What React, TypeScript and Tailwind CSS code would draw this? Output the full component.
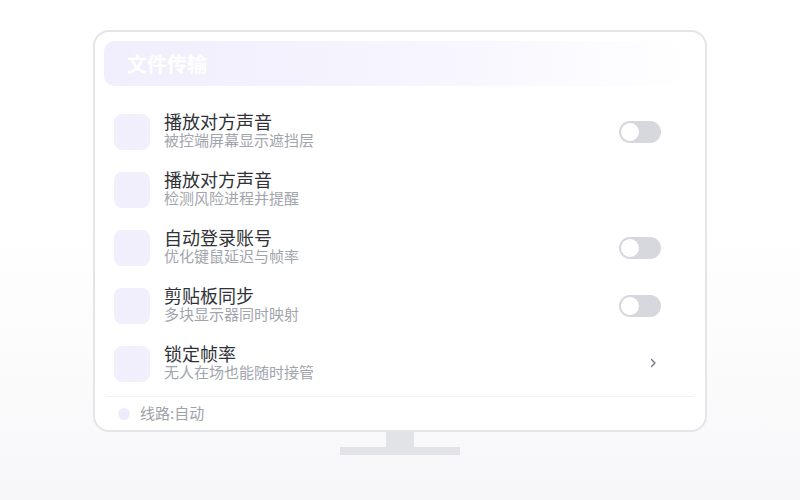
import React from "react";

type Row = {
  title: string;
  desc: string;
  action: "toggle" | "none" | "chevron";
};

const rows: Row[] = [
  { title: "播放对方声音", desc: "被控端屏幕显示遮挡层", action: "toggle" },
  { title: "播放对方声音", desc: "检测风险进程并提醒", action: "none" },
  { title: "自动登录账号", desc: "优化键鼠延迟与帧率", action: "toggle" },
  { title: "剪贴板同步", desc: "多块显示器同时映射", action: "toggle" },
  { title: "锁定帧率", desc: "无人在场也能随时接管", action: "chevron" },
];

function Toggle() {
  return (
    <div className="w-[42px] h-[22px] rounded-full bg-[#d6d8de] flex items-center px-[1px]">
      <div className="w-[20px] h-[20px] rounded-full bg-white border border-[#d3d6dc]" />
    </div>
  );
}

function Chevron() {
  return (
    <svg width="8" height="12" viewBox="0 0 8 12" className="mr-[4px] mb-[3px]">
      <path d="M2.5 2.5 L6 6 L2.5 9.5" fill="none" stroke="#6b7280" strokeWidth="1.3" strokeLinecap="round" strokeLinejoin="round" />
    </svg>
  );
}

function SettingRow({ row }: { row: Row }) {
  return (
    <div className="h-[58px] flex items-center gap-[14px] pl-[10px] pr-[35px]">
      <div className="w-[36px] h-[36px] rounded-[8px] bg-[#f2effd] shrink-0" />
      <div className="flex-1 flex flex-col pb-[4px]">
        <div className="text-[18px] leading-[18px] text-[#303237]">{row.title}</div>
        <div className="mt-[2px] text-[15px] leading-[16px] text-[#a1a5ad]">{row.desc}</div>
      </div>
      {row.action === "toggle" && <Toggle />}
      {row.action === "chevron" && <Chevron />}
    </div>
  );
}

export default function App() {
  return (
    <div className="w-[800px] h-[500px] bg-gradient-to-b from-white from-45% to-[#f7f7f9] flex flex-col items-center pt-[30px] font-['Noto_Sans_CJK_SC','Noto_Sans',sans-serif]">
      <div className="w-[614px] rounded-[16px] border-2 border-[#e3e5e9] bg-white px-[9px] pt-[9px]">
        <div className="h-[45px] rounded-[10px] bg-gradient-to-r from-[#f1eefd] via-[#f6f4fe] to-white flex items-center justify-between pl-[23px] pr-[36px]">
          <span className="text-[20px] font-bold text-white">文件传输</span>
          <span className="text-[14px] text-white tracking-[2px]">•••</span>
        </div>

        <div className="mt-[17px] flex flex-col">
          {rows.map((row, i) => (
            <SettingRow key={i} row={row} />
          ))}
        </div>

        <div className="mt-[3px] mx-[2px] border-t border-[#eff0f3] h-[34px] flex items-center gap-[10px] pl-[12px]">
          <div className="w-[12px] h-[12px] rounded-full bg-[#eeebfc]" />
          <span className="text-[15px] text-[#9ea2aa]">线路:自动</span>
        </div>
      </div>

      <div className="w-[28px] h-[15px] bg-[#e1e3e7]" />
      <div className="w-[120px] h-[8px] bg-[#e1e3e7]" />
    </div>
  );
}
